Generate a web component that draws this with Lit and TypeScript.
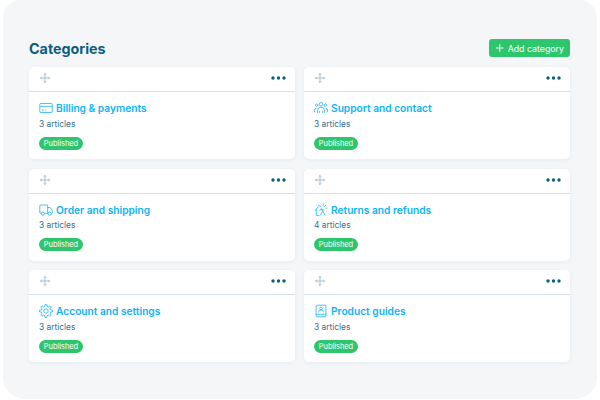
import { LitElement, html, css, svg } from "lit";
import { customElement } from "lit/decorators.js";

function gearPath(cx: number, cy: number, outer: number, inner: number, teeth: number): string {
  const pts: string[] = [];
  const step = (2 * Math.PI) / teeth;
  for (let i = 0; i < teeth; i++) {
    const a = i * step;
    const p = (r: number, t: number) =>
      `${(cx + r * Math.cos(a + t)).toFixed(2)} ${(cy + r * Math.sin(a + t)).toFixed(2)}`;
    pts.push(p(inner, -step * 0.3), p(outer, -step * 0.16), p(outer, step * 0.16), p(inner, step * 0.3));
  }
  return "M" + pts.join("L") + "Z";
}

const ICONS: Record<string, unknown> = {
  card: svg`<rect x="1" y="3" width="15" height="11" rx="1"/><path d="M1 6.5h15"/><path d="M3.5 11h2.5M7.5 11h1.5"/>`,
  people: svg`<circle cx="8.5" cy="4" r="2.1"/><circle cx="3.3" cy="5" r="1.5"/><circle cx="13.7" cy="5" r="1.5"/><path d="M4.3 14.5v-2.8a4.2 4.2 0 0 1 8.4 0v2.8"/><path d="M.6 13.5v-2a3 3 0 0 1 2.4-3M16.4 13.5v-2a3 3 0 0 0-2.4-3"/><path d="M6.5 14.5v-2.5M10.5 14.5v-2.5"/>`,
  truck: svg`<path d="M4 2.5h6.5v10H6.5"/><path d="M4 2.5H2A1 1 0 0 0 1 3.5v8a1 1 0 0 0 1 1h.5"/><path d="M10.5 5.5h3l2.5 3.2v3.8h-1.3"/><path d="M10.5 12.5h.6"/><circle cx="4.5" cy="13" r="1.9"/><circle cx="12.9" cy="13" r="1.9"/>`,
  returns: svg`<path d="M1 9.5 6.5 2.5 9 5"/><path d="M2.8 7.5V15h3.7"/><path d="m11.5 .8-.6 2.4M14.5 2.5 12.5 4.5M16.2 6l-2.4.5"/><path d="m8.5 6.5 5 8.5M10.5 10 7.5 15M6.5 9 9.5 7.5l3 1.5"/>`,
  gear: svg`<path stroke-linejoin="round" d=${gearPath(8.5, 8.5, 8, 5.8, 8)}/><circle cx="8.5" cy="8.5" r="2.7"/>`,
  book: svg`<rect x="2.5" y="1.5" width="12" height="14" rx="1"/><path d="M2.5 12.5h12"/><circle cx="8.5" cy="5.5" r="1.6"/><path d="M5.5 10.3a3 3 0 0 1 6 0"/>`,
};

const ITEMS = [
  { icon: "card", title: "Billing & payments", count: 3 },
  { icon: "people", title: "Support and contact", count: 3 },
  { icon: "truck", title: "Order and shipping", count: 3 },
  { icon: "returns", title: "Returns and refunds", count: 4 },
  { icon: "gear", title: "Account and settings", count: 3 },
  { icon: "book", title: "Product guides", count: 3 },
];

@customElement("app-root")
export class AppRoot extends LitElement {
  static styles = css`
    :host {
      display: block;
      width: 600px;
      height: 400px;
      background: #fff;
      font-family: "Inter", "Liberation Sans", sans-serif;
      overflow: hidden;
    }
    .panel {
      box-sizing: border-box;
      width: 594px;
      height: 399px;
      margin: 0 3px;
      padding: 39px 27px 0 26px;
      background: #f4f6f8;
      border-radius: 18px 18px 22px 22px;
    }
    .head {
      display: flex;
      justify-content: space-between;
      align-items: center;
      height: 18px;
      margin-bottom: 10px;
    }
    h1 {
      margin: 1px 0 0;
      font-size: 14.3px;
      font-weight: 700;
      color: #0d5c80;
      line-height: 18px;
    }
    .add {
      display: flex;
      align-items: center;
      gap: 4px;
      box-sizing: border-box;
      width: 81px;
      height: 18px;
      padding-left: 7px;
      border: 0;
      border-radius: 3px;
      background: #2ec66d;
      color: #fff;
      font: 400 8.8px "Inter", "Liberation Sans", sans-serif;
      white-space: nowrap;
    }
    .add svg {
      width: 8px;
      height: 8px;
      stroke: #fff;
      fill: none;
      stroke-width: 1;
    }
    .grid {
      display: grid;
      grid-template-columns: 266px 266px;
      grid-auto-rows: 92px;
      column-gap: 9px;
      row-gap: 9.5px;
    }
    .card {
      background: #fff;
      border-radius: 5px;
      box-shadow: 0 1px 4px rgba(40, 70, 100, 0.06);
    }
    .bar {
      display: flex;
      justify-content: space-between;
      align-items: center;
      box-sizing: border-box;
      height: 25px;
      padding: 0 9px 2px 11px;
      border-bottom: 1px solid #d8e1e8;
    }
    .move {
      width: 10px;
      height: 10px;
      stroke: #a9bfce;
      fill: none;
      stroke-width: 1.1;
    }
    .dots {
      width: 15px;
      height: 4px;
      fill: #0d5c80;
    }
    .body {
      padding: 7.5px 10px 0;
    }
    .title {
      display: flex;
      align-items: center;
      gap: 3px;
      height: 17px;
      font-size: 10.2px;
      font-weight: 600;
      color: #0fb4f5;
      white-space: nowrap;
    }
    .title svg {
      width: 14px;
      height: 14px;
      stroke: #20b6f3;
      fill: none;
      stroke-width: 1;
      flex: none;
    }
    .count {
      margin-top: 2px;
      font-size: 8.4px;
      line-height: 11px;
      color: #38708d;
    }
    .badge {
      display: block;
      margin-top: 7px;
      width: 44px;
      height: 13px;
      border-radius: 7px;
      background: #2ec66d;
      color: #fff;
      font-size: 7.4px;
      font-weight: 400;
      line-height: 13px;
      text-align: center;
    }
  `;

  render() {
    return html`<div class="panel">
      <div class="head">
        <h1>Categories</h1>
        <button class="add">
          <svg viewBox="0 0 8 8"><path d="M4 0v8M0 4h8" /></svg>Add category
        </button>
      </div>
      <div class="grid">
        ${ITEMS.map(
          (it) => html`<div class="card">
            <div class="bar">
              <svg class="move" viewBox="0 0 11 11">
                <path d="M5.5 0.5v10M0.5 5.5h10" />
                <path d="M4 2 5.5.5 7 2M4 9l1.5 1.5L7 9M2 4 .5 5.5 2 7M9 4l1.5 1.5L9 7" />
              </svg>
              <svg class="dots" viewBox="0 0 15 4">
                <circle cx="2" cy="2" r="1.7" /><circle cx="7.5" cy="2" r="1.7" /><circle cx="13" cy="2" r="1.7" />
              </svg>
            </div>
            <div class="body">
              <div class="title">
                <svg viewBox="0 0 17 17">${ICONS[it.icon]}</svg>${it.title}
              </div>
              <div class="count">${it.count} articles</div>
              <span class="badge">Published</span>
            </div>
          </div>`
        )}
      </div>
    </div>`;
  }
}
